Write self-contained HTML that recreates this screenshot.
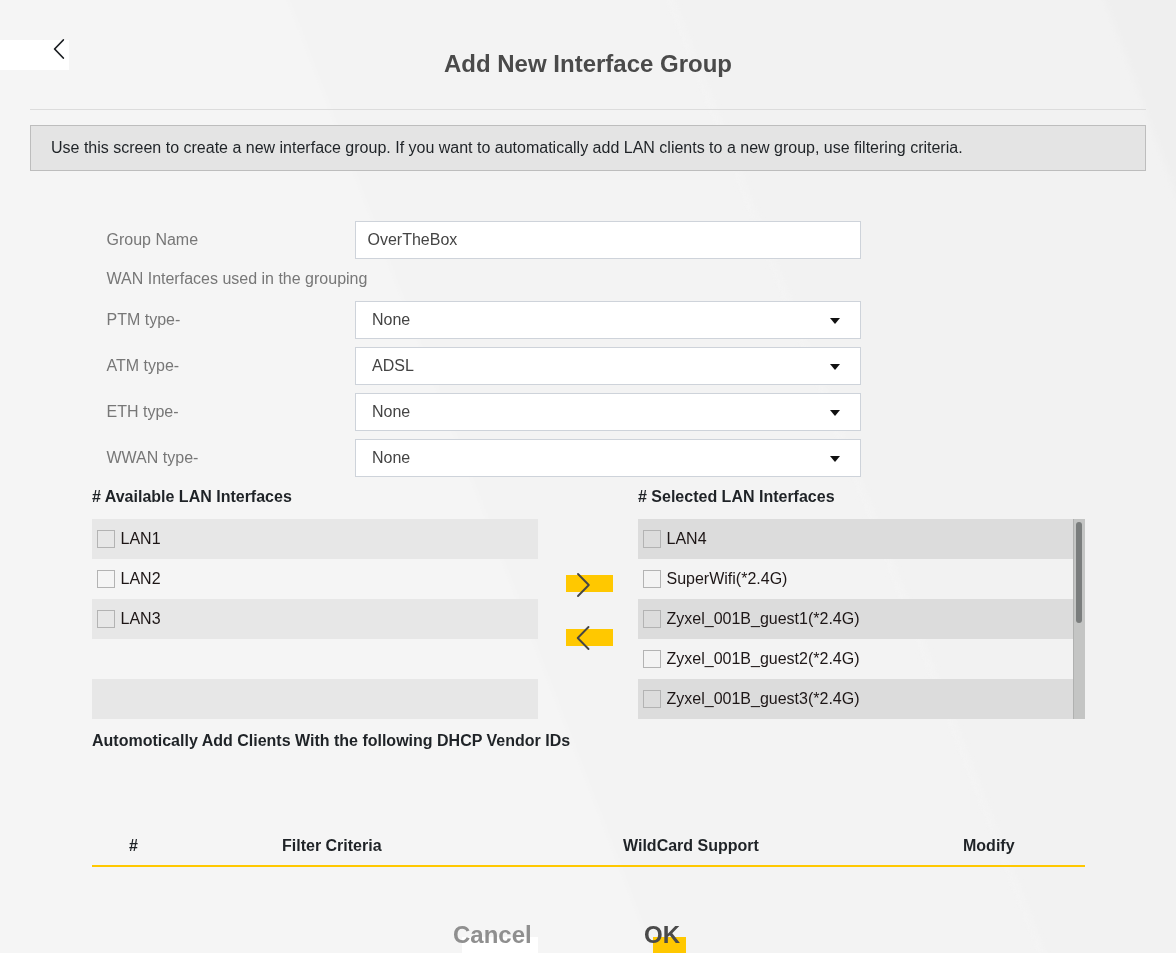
<!DOCTYPE html>
<html><head><meta charset="utf-8">
<style>
html,body{margin:0;padding:0;}
body{width:1176px;height:953px;overflow:hidden;position:relative;background:#f4f4f4;font-family:"Liberation Sans",sans-serif;}
#wrap{position:absolute;left:0;top:0;width:1176px;height:953px;will-change:transform;}
.abs{position:absolute;}
#backbox{left:0;top:40px;width:69px;height:30px;background:#fff;}
#title{left:0;width:1176px;top:49px;text-align:center;font-size:24px;font-weight:bold;color:#4a4a4a;line-height:30px;}
#hr{left:30px;top:109px;width:1116px;height:1px;background:#dcdcdc;}
#info{left:30px;top:125px;width:1114px;height:44px;border:1px solid #bdbdbd;background:#e4e4e4;}
#info span{position:absolute;left:20px;top:13px;font-size:16px;color:#1f2327;line-height:18px;}
.lbl{position:absolute;left:106.5px;font-size:16px;color:#777;line-height:18px;}
.inp{position:absolute;left:355px;width:504px;height:36px;border:1px solid #ced3da;background:#fff;}
.inp span{position:absolute;left:11.5px;top:9px;font-size:16px;color:#444;line-height:18px;}
.inp.sel span{left:16px;}
.caret{position:absolute;left:474px;top:16px;width:0;height:0;border-left:5px solid transparent;border-right:5px solid transparent;border-top:6px solid #111;}
.hd{position:absolute;font-size:16px;font-weight:bold;color:#1f2327;line-height:18px;}
.list{position:absolute;top:519px;height:200px;overflow:hidden;}
.row{position:relative;height:40px;}
.row.g{background:#e7e7e7;}
.cb{position:absolute;left:5px;top:11px;width:18px;height:18px;box-sizing:border-box;border:1px solid #b3b3b3;background:transparent;}
.row span{position:absolute;left:28.5px;top:11px;font-size:16px;color:#1d1616;line-height:18px;}
.arrowbtn{position:absolute;left:566px;width:47px;height:17px;background:#ffc800;}
.th{position:absolute;top:837px;font-size:16px;font-weight:bold;color:#1f2327;line-height:18px;}
#tline{left:92px;top:865px;width:993px;height:2px;background:#ffc800;}
#cancel{left:453px;top:920px;font-size:24px;font-weight:bold;color:#8f8f8f;line-height:30px;}
#ok{left:644px;top:920px;font-size:24px;font-weight:bold;color:#4a4a4a;line-height:30px;}
</style></head>
<body>
<div id="wrap">
<svg class="abs" style="left:0;top:0" width="1176" height="953"><defs><filter id="bl" x="-5%" y="-5%" width="110%" height="110%"><feGaussianBlur stdDeviation="3"/></filter></defs>
<rect x="0" y="0" width="1176" height="953" fill="#f2f2f2"/>
<g filter="url(#bl)">
<polygon points="-20,-20 282,-20 662,973 -20,973" fill="#f5f5f5"/>
<polygon points="282,-20 663,-20 1050,973 662,973" fill="#f3f3f3"/>
<polygon points="1098,-20 1200,-20 1200,260" fill="#efefef"/>
</g>
<line x1="663" y1="-20" x2="1050" y2="973" stroke="#f7f7f7" stroke-width="2" filter="url(#bl)"/>
</svg>
<div class="abs" id="backbox"></div>
<svg class="abs" style="left:0;top:0" width="80" height="80"><path d="M63.3 40 L54.6 49 L63.3 58" fill="none" stroke="#1b1e22" stroke-width="1.75" stroke-linecap="round" stroke-linejoin="round"/></svg>
<div class="abs" id="title">Add New Interface Group</div>
<div class="abs" id="hr"></div>
<div class="abs" id="info"><span>Use this screen to create a new interface group. If you want to automatically add LAN clients to a new group, use filtering criteria.</span></div>

<div class="lbl" style="top:231px">Group Name</div>
<div class="inp" style="top:221px"><span>OverTheBox</span></div>
<div class="lbl" style="top:270px">WAN Interfaces used in the grouping</div>
<div class="lbl" style="top:311px">PTM type-</div>
<div class="inp sel" style="top:301px"><span>None</span><div class="caret"></div></div>
<div class="lbl" style="top:357px">ATM type-</div>
<div class="inp sel" style="top:347px"><span>ADSL</span><div class="caret"></div></div>
<div class="lbl" style="top:403px">ETH type-</div>
<div class="inp sel" style="top:393px"><span>None</span><div class="caret"></div></div>
<div class="lbl" style="top:449px">WWAN type-</div>
<div class="inp sel" style="top:439px"><span>None</span><div class="caret"></div></div>

<div class="hd" style="left:92px;top:488px"># Available LAN Interfaces</div>
<div class="list" style="left:92px;width:446px">
 <div class="row g"><div class="cb"></div><span>LAN1</span></div>
 <div class="row"><div class="cb"></div><span>LAN2</span></div>
 <div class="row g"><div class="cb"></div><span>LAN3</span></div>
 <div class="row"></div>
 <div class="row g"></div>
</div>

<div class="arrowbtn" style="top:575px"></div>

<div class="arrowbtn" style="top:629px"></div>
<svg class="abs" style="left:540px;top:550px" width="100" height="120"><path d="M578 574 L588.8 585 L578 596" transform="translate(-540 -550)" fill="none" stroke="#454545" stroke-width="1.9" stroke-linecap="round" stroke-linejoin="round"/><path d="M588.5 627 L577.7 638 L588.5 649" transform="translate(-540 -550)" fill="none" stroke="#454545" stroke-width="1.9" stroke-linecap="round" stroke-linejoin="round"/></svg>

<div class="hd" style="left:638px;top:488px"># Selected LAN Interfaces</div>
<div class="list" style="left:638px;width:447px">
 <div class="row g" style="background:#dcdcdc"><div class="cb"></div><span>LAN4</span></div>
 <div class="row"><div class="cb"></div><span>SuperWifi(*2.4G)</span></div>
 <div class="row g" style="background:#dcdcdc"><div class="cb"></div><span>Zyxel_001B_guest1(*2.4G)</span></div>
 <div class="row"><div class="cb"></div><span>Zyxel_001B_guest2(*2.4G)</span></div>
 <div class="row g" style="background:#dcdcdc"><div class="cb"></div><span>Zyxel_001B_guest3(*2.4G)</span></div>
 <div class="abs" style="left:435px;top:0;width:11px;height:200px;background:#c4c5c4;border-left:1px solid #b0b1b0"></div>
 <div class="abs" style="left:438px;top:3px;width:6px;height:101px;border-radius:3px;background:#7a7d7d"></div>
</div>

<div class="hd" style="left:92px;top:732px">Automotically Add Clients With the following DHCP Vendor IDs</div>
<div class="th" style="left:129px">#</div>
<div class="th" style="left:282px">Filter Criteria</div>
<div class="th" style="left:623px">WildCard Support</div>
<div class="th" style="left:963px">Modify</div>
<div class="abs" id="tline"></div>

<div class="abs" style="left:462px;top:937px;width:76px;height:16px;background:#fff"></div>
<div class="abs" style="left:653px;top:937px;width:33px;height:16px;background:#ffc800"></div>
<div class="abs" id="cancel">Cancel</div>
<div class="abs" id="ok">OK</div>
</div>
</body></html>
